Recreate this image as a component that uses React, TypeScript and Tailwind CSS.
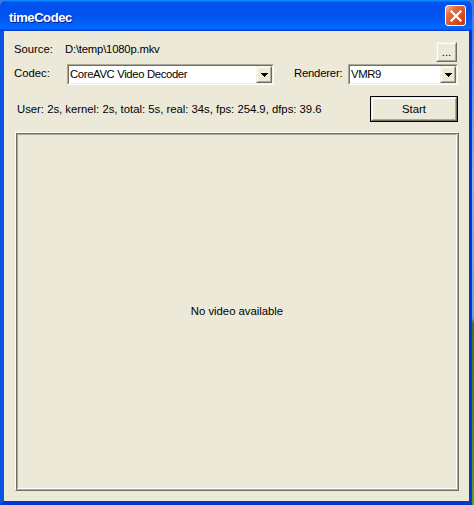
import React from "react";

function Raised({ className = "", children }: { className?: string; children?: React.ReactNode }) {
  return (
    <div
      className={
        "border border-t-[#f1efe2] border-l-[#f1efe2] border-r-[#716f64] border-b-[#716f64] " + className
      }
    >
      <div className="w-full h-full border border-t-white border-l-white border-r-[#aca899] border-b-[#aca899] bg-[#ece9d8] flex items-center justify-center">
        {children}
      </div>
    </div>
  );
}

function Arrow() {
  return (
    <svg width="7" height="4" viewBox="0 0 7 4" shapeRendering="crispEdges">
      <path d="M0 0h7v1h-1v1h-1v1h-1v1h-1v-1h-1v-1h-1v-1h-1z" fill="#000" />
    </svg>
  );
}

function Combo({ value, className = "" }: { value: string; className?: string }) {
  return (
    <div
      className={
        "h-[21px] border border-t-[#aca899] border-l-[#aca899] border-r-white border-b-white " + className
      }
    >
      <div className="h-full border border-t-[#716f64] border-l-[#716f64] border-r-[#f1efe2] border-b-[#f1efe2] bg-white flex">
        <span className="flex-1 self-center pl-[1px] leading-[13px] tracking-[-0.35px] whitespace-nowrap overflow-hidden">
          {value}
        </span>
        <Raised className="w-[16px] h-full">
          <Arrow />
        </Raised>
      </div>
    </div>
  );
}

export default function App() {
  return (
    <div className="w-[474px] h-[505px] overflow-hidden bg-[linear-gradient(180deg,#3f78dc_0%,#8fb2ee_35%,#6d9be6_63%,#3f7420_64%,#5e9a2c_100%)]">
      <div className="w-[472px] h-[505px] flex flex-col [font-family:'Liberation_Sans',Arial,sans-serif] text-black">
        {/* Title bar */}
        <div className="h-[31px] rounded-t-[7px] flex items-center justify-between pl-[9px] pr-[6px] bg-[linear-gradient(180deg,#0997ff,#0053ee_8%,#0050ee_40%,#0066ff_88%,#0066ff_93%,#005bff_95%,#003dd7_96%,#003dd7)]">
          <span className="pt-[4px] text-[13px] leading-[15px] font-bold tracking-[-0.4px] text-white [text-shadow:1px_1px_0_#0a1a8a]">
            timeCodec
          </span>
          <div className="w-[21px] h-[21px] rounded-[3px] border border-white bg-[linear-gradient(135deg,#f3b49c_0%,#e56a42_30%,#d6491e_70%,#c23a10_100%)] flex items-center justify-center">
            <svg width="12" height="12" viewBox="0 0 12 12">
              <path d="M1.5 1.5L10.5 10.5M10.5 1.5L1.5 10.5" stroke="#fff" strokeWidth="2.2" strokeLinecap="square" />
            </svg>
          </div>
        </div>

        {/* Body */}
        <div className="flex-1 flex flex-col bg-[#ece9d8] border-l-4 border-r-[3px] border-b-4 border-l-[#0b55e6] border-r-[#0636d0] border-b-[#0636d0] pl-[10px] pr-[11px] pt-[11px] text-[11.3px] leading-[13px]">
          {/* Source row */}
          <div className="flex items-start h-[20px]">
            <span className="w-[51px] pt-[1px]">Source:</span>
            <span className="pt-[1px] tracking-[-0.2px]">D:\temp\1080p.mkv</span>
            <Raised className="ml-auto mr-[1px] w-[21px] h-[20px]">
              <span className="pt-[1px]">...</span>
            </Raised>
          </div>

          {/* Codec row */}
          <div className="flex items-start h-[21px] mt-[2px]">
            <span className="w-[53px] pt-[3px]">Codec:</span>
            <Combo value="CoreAVC Video Decoder" className="w-[207px]" />
            <span className="ml-[20px] w-[54px] pt-[3px] tracking-[-0.2px]">Renderer:</span>
            <Combo value="VMR9" className="flex-1" />
          </div>

          {/* Stats row */}
          <div className="flex items-center h-[26px] mt-[11px]">
            <span className="pl-[3px] whitespace-nowrap">
              User: 2s, kernel: 2s, total: 5s, real: 34s, fps: 254.9, dfps: 39.6
            </span>
            <div className="ml-auto w-[88px] h-[26px] border border-black">
              <Raised className="w-full h-full">
                <span>Start</span>
              </Raised>
            </div>
          </div>

          {/* Video panel */}
          <div className="mt-[10px] ml-[1px] mr-[-1px] h-[359px] border border-t-white border-l-white border-r-[#716f64] border-b-[#716f64]">
            <div className="w-full h-full border border-t-[#716f64] border-l-[#716f64] border-r-[#aca899] border-b-[#aca899]">
              <div className="w-full h-full border border-t-[#aca899] border-l-[#aca899] border-r-white border-b-white flex items-center justify-center">
                <span>No video available</span>
              </div>
            </div>
          </div>
        </div>
      </div>
    </div>
  );
}
